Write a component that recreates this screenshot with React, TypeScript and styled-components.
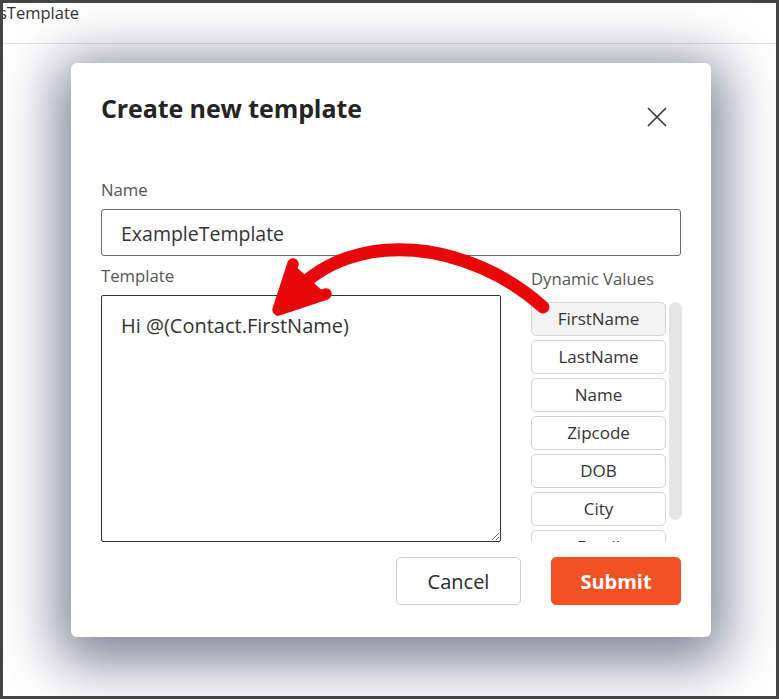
import styled, { createGlobalStyle } from 'styled-components';

const GlobalStyle = createGlobalStyle`
    html, body {
        margin: 0;
        padding: 0;
        background: #444;
    }
    body {
        font-family: "Open Sans", "Noto Sans", Arial, sans-serif;
        color: #333;
    }
`

const Frame = styled.div`
    position: relative;
    width: 779px;
    height: 699px;
    box-sizing: border-box;
    border: 3px solid #444;
    background: #fff;
    overflow: hidden;
`

const TopBar = styled.div`
    height: 40px;
    border-bottom: 1px solid #e2e2e2;
    font-size: 16.5px;
    line-height: 19px;
    color: #333;
    text-indent: -4px;
`

const Overlay = styled.div`
    position: absolute;
    inset: 0;
    display: flex;
    align-items: center;
    justify-content: center;
    padding-left: 3px;
`

const Modal = styled.div`
    position: relative;
    width: 640px;
    height: 574px;
    box-sizing: border-box;
    padding: 28px 30px 30px 30px;
    background: #fff;
    border-radius: 6px;
    box-shadow: 0 12px 55px 14px rgba(60, 60, 90, 0.64);
    display: flex;
    flex-direction: column;
`

const HeaderRow = styled.div`
    display: flex;
    justify-content: space-between;
    align-items: flex-start;
    height: 68px;
    margin-bottom: 20px;
`

const Title = styled.h2`
    margin: 0;
    font-size: 25px;
    font-weight: 700;
    line-height: 34px;
    color: #242424;
    letter-spacing: -0.1px;
`

const CloseButton = styled.button`
    width: 40px;
    height: 40px;
    margin: 6px 4px 0 0;
    padding: 0;
    border: none;
    background: transparent;
    display: flex;
    align-items: center;
    justify-content: center;
    color: #333;
`

const Label = styled.label<{ $offset?: number; $gap?: number }>`
    display: block;
    font-size: 16.7px;
    line-height: 22px;
    color: #555;
    margin-top: ${p => p.$offset ?? 0}px;
    margin-bottom: ${p => p.$gap ?? 8}px;
`

const TextInput = styled.input`
    display: block;
    width: 100%;
    height: 47px;
    box-sizing: border-box;
    border: 1px solid #6b6b6b;
    border-radius: 3px;
    padding: 2px 19px 0;
    font-family: inherit;
    font-size: 19.5px;
    color: #333;
    outline: none;
    margin-bottom: 9px;
`

const Body = styled.div`
    display: flex;
    gap: 30px;
`

const Column = styled.div<{ $width: number }>`
    width: ${p => p.$width}px;
    display: flex;
    flex-direction: column;
`

const TemplateArea = styled.textarea`
    display: block;
    width: 400px;
    height: 247px;
    box-sizing: border-box;
    border: 1px solid #333;
    border-radius: 2px;
    padding: 16px 19px;
    font-family: inherit;
    font-size: 20px;
    line-height: 28px;
    color: #333;
    outline: none;
`

const ListWrap = styled.div`
    display: flex;
    gap: 3px;
    height: 240px;
`

const ValueList = styled.div`
    width: 135px;
    height: 240px;
    overflow: hidden;
    display: flex;
    flex-direction: column;
    gap: 4px;
`

const ScrollThumb = styled.div`
    width: 13px;
    height: 218px;
    border-radius: 7px;
    background: #e6e6e6;
`

const ValueButton = styled.button<{ $active?: boolean }>`
    flex: 0 0 34px;
    width: 135px;
    box-sizing: border-box;
    border: 1px solid #d6d6d6;
    border-radius: 5px;
    background: ${p => p.$active ? '#f3f3f3' : '#fff'};
    font-family: inherit;
    font-size: 17px;
    color: #333;
    padding: 0;
`

const Footer = styled.div`
    display: flex;
    justify-content: flex-end;
    gap: 30px;
    margin-top: 15px;
`

const ActionButton = styled.button<{ $primary?: boolean; $width: number }>`
    width: ${p => p.$width}px;
    height: 48px;
    box-sizing: border-box;
    border-radius: 5px;
    border: 1px solid ${p => p.$primary ? '#f15124' : '#cfcfcf'};
    background: ${p => p.$primary ? '#f15124' : '#fff'};
    color: ${p => p.$primary ? '#fff' : '#2b2b2b'};
    font-family: inherit;
    font-size: 20px;
    font-weight: ${p => p.$primary ? 700 : 500};
    padding-top: 3px;
`

const ArrowLayer = styled.svg`
    position: absolute;
    left: 0;
    top: 0;
    width: 640px;
    height: 574px;
    pointer-events: none;
`

const dynamicValues = ['FirstName', 'LastName', 'Name', 'Zipcode', 'DOB', 'City', 'Email'];

const App = () => (
    <>
        <GlobalStyle />
        <Frame>
            <TopBar>sTemplate</TopBar>
            <Overlay>
                <Modal>
                    <HeaderRow>
                        <Title>Create new template</Title>
                        <CloseButton aria-label="Close">
                            <svg width="20" height="20" viewBox="0 0 20 20">
                                <path d="M1 1 L19 19 M19 1 L1 19" stroke="#333" strokeWidth="1.6" fill="none" />
                            </svg>
                        </CloseButton>
                    </HeaderRow>
                    <Label>Name</Label>
                    <TextInput defaultValue="ExampleTemplate" />
                    <Body>
                        <Column $width={400}>
                            <Label>Template</Label>
                            <TemplateArea defaultValue="Hi @(Contact.FirstName)" />
                        </Column>
                        <Column $width={151}>
                            <Label $offset={3} $gap={12}>Dynamic Values</Label>
                            <ListWrap>
                                <ValueList>
                                    {dynamicValues.map((v, i) => (
                                        <ValueButton key={v} $active={i === 0}>{v}</ValueButton>
                                    ))}
                                </ValueList>
                                <ScrollThumb />
                            </ListWrap>
                        </Column>
                    </Body>
                    <Footer>
                        <ActionButton $width={125}>Cancel</ActionButton>
                        <ActionButton $width={130} $primary>Submit</ActionButton>
                    </Footer>
                    <ArrowLayer viewBox="71 62 640 574">
                        <path d="M543 306 C 472 242, 354 222, 290 296" stroke="#e8070b" strokeWidth="13" strokeLinecap="round" fill="none" />
                        <path d="M293 263 L278 309 L326 293" stroke="#e8070b" strokeWidth="11.5" strokeLinecap="round" strokeLinejoin="round" fill="#e8070b" />
                    </ArrowLayer>
                </Modal>
            </Overlay>
        </Frame>
    </>
)

export default App;
